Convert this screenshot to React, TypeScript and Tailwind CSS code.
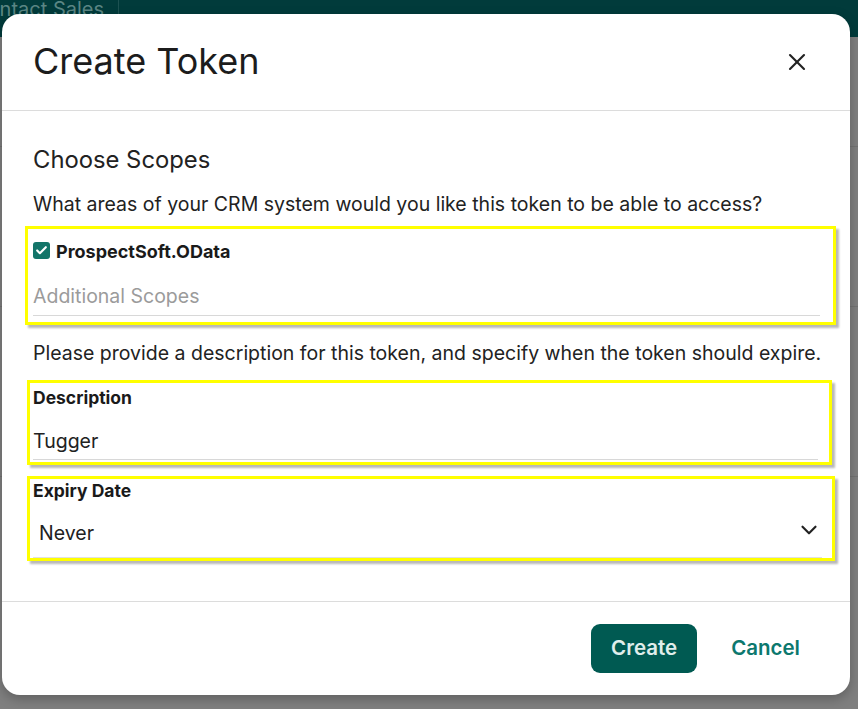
import React from 'react';
import { X, ChevronDown, Check } from 'lucide-react';

const font = { fontFamily: 'Inter, "Noto Sans", sans-serif' };

export default function App() {
  return (
    <div className="relative w-[858px] h-[709px] overflow-hidden bg-[#7f7f7f]" style={font}>
      {/* dimmed page behind */}
      <div className="h-[37px] bg-[#013b3b] flex">
        <div className="w-[119px] h-full border-r border-[#1d5252] overflow-hidden">
          <div className="-ml-[27px] -mt-[3px] text-[20px] leading-[24px] text-[#5b8684] whitespace-nowrap">Contact Sales</div>
        </div>
      </div>
      <div className="border-b border-[#737373] h-[110px]" />
      <div className="border-b border-[#737373] h-[160px]" />
      <div className="border-b border-[#737373] h-[170px]" />

      {/* modal */}
      <div className="absolute left-[2px] top-[14px] w-[848px] h-[681px] bg-white rounded-[18px] shadow-[0_4px_12px_rgba(0,0,0,0.25)] flex flex-col">
        <div className="h-[97px] shrink-0 border-b border-[#dcdcdc] flex items-center justify-between pl-[31px] pr-[39px]">
          <h1 className="text-[36px] leading-[44px] font-normal text-[#1c1c1c] -mt-[3px]">Create Token</h1>
          <button className="text-[#222] -mt-[1px]">
            <X className="w-[28px] h-[28px]" strokeWidth={1.8} />
          </button>
        </div>

        <div className="flex-1 px-[31px] pt-[34px] text-[#222]">
          <h2 className="text-[23.8px] leading-[30px] text-[#222]">Choose Scopes</h2>
          <p className="mt-[16px] text-[19.5px] leading-[26px] whitespace-nowrap">
            What areas of your CRM system would you like this token to be able to access?
          </p>

          <div className="mt-[9px] -ml-[8px] w-[811px] h-[99px] border-[3px] border-[#ffff00] shadow-[3px_3px_2px_rgba(0,0,0,0.28)] pl-[5px] pr-[13px] pt-[12px]">
            <div className="flex items-center gap-[6px] h-[22px]">
              <span className="w-[17px] h-[17px] rounded-[3px] bg-[#137569] flex items-center justify-center -mt-[3px]">
                <Check className="w-[13px] h-[13px] text-white" strokeWidth={4} />
              </span>
              <span className="text-[18px] leading-[22px] font-bold text-[#1a1a1a]">ProspectSoft.OData</span>
            </div>
            <div className="mt-[20px] h-[33px] border-b border-[#d8d8d8] text-[19.5px] leading-[26px] text-[#9b9b9b]">
              Additional Scopes
            </div>
          </div>

          <p className="mt-[15px] text-[19.5px] leading-[26px] whitespace-nowrap">
            Please provide a description for this token, and specify when the token should expire.
          </p>

          <div className="mt-[14px] -ml-[6px] w-[805px] h-[85px] border-[3px] border-[#ffff00] shadow-[3px_3px_2px_rgba(0,0,0,0.28)] pl-[3px] pr-[11px] pt-[3px]">
            <div className="text-[17.5px] leading-[24px] font-bold text-[#1a1a1a]">Description</div>
            <div className="mt-[18px] h-[32px] border-b border-[#d8d8d8] text-[19.5px] leading-[26px]">Tugger</div>
          </div>

          <div className="mt-[11px] -ml-[6px] w-[808px] h-[85px] border-[3px] border-[#ffff00] shadow-[3px_3px_2px_rgba(0,0,0,0.28)] pl-[3px] pr-[10px]">
            <div className="text-[17.5px] leading-[24px] font-bold text-[#1a1a1a]">Expiry Date</div>
            <div className="mt-[6px] h-[49px] border-b border-[#e0e0e0] flex items-center justify-between pl-[6px]">
              <span className="text-[19.5px] leading-[26px]">Never</span>
              <ChevronDown className="w-[26px] h-[26px] text-[#222] -mt-[6px]" strokeWidth={2} />
            </div>
          </div>
        </div>

        <div className="h-[94px] shrink-0 border-t border-[#dcdcdc] flex items-center justify-end gap-[34px] pr-[50px]">
          <button className="w-[106px] h-[49px] rounded-[9px] bg-[#005a52] text-[#e0eeec] text-[20.5px] font-semibold">
            Create
          </button>
          <button className="text-[20.5px] font-semibold text-[#0c786e]">Cancel</button>
        </div>
      </div>
    </div>
  );
}
